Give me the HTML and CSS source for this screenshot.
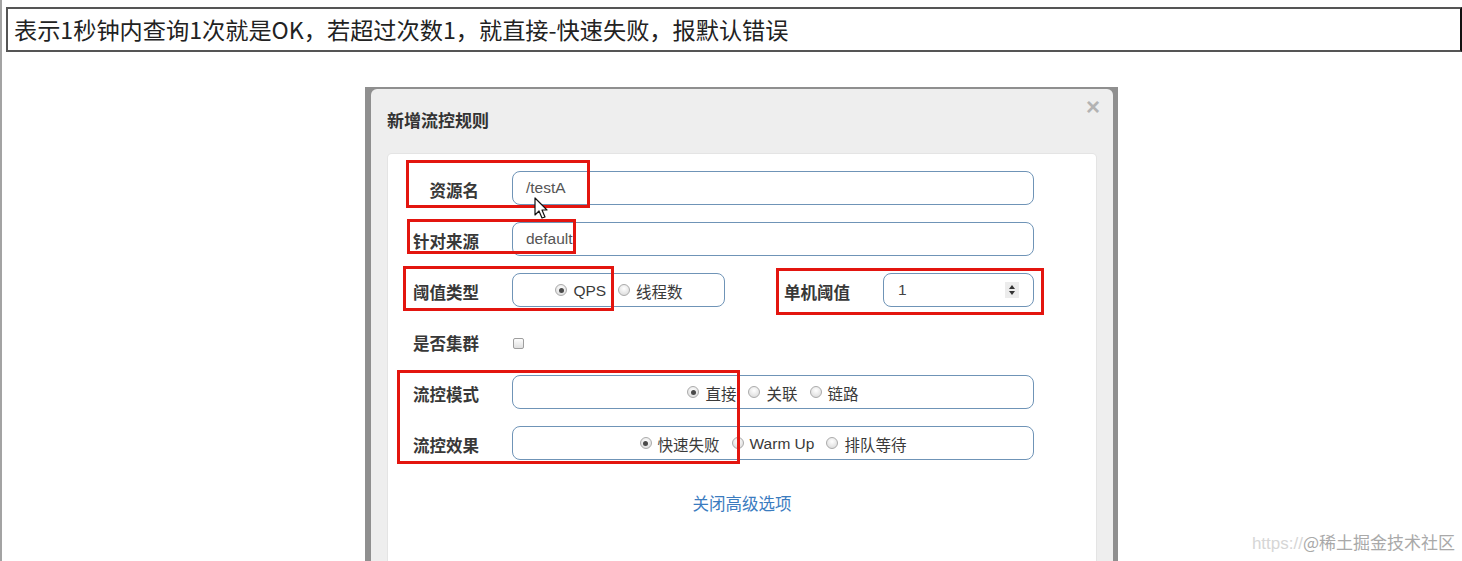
FILE: index.html
```html
<!DOCTYPE html>
<html lang="zh-CN">
<head>
<meta charset="utf-8">
<title>新增流控规则</title>
<link rel="stylesheet" href="styles.css">
</head>
<body>
<div class="page">
  <div class="banner">表示1秒钟内查询1次就是OK，若超过次数1，就直接-快速失败，报默认错误</div>

  <div class="frame">
    <div class="modal">
      <div class="modal-header">
        <div class="modal-title">新增流控规则</div>
        <div class="close">×</div>
      </div>
      <div class="panel">
        <div class="row">
          <div class="label">资源名</div>
          <div class="field wide">/testA</div>
        </div>
        <div class="row">
          <div class="label">针对来源</div>
          <div class="field wide">default</div>
        </div>
        <div class="row">
          <div class="label">阈值类型</div>
          <div class="field radios narrow">
            <span class="opt"><span class="radio on"></span>QPS</span>
            <span class="opt"><span class="radio"></span>线程数</span>
          </div>
          <div class="label label2">单机阈值</div>
          <div class="field number">
            <span>1</span>
            <span class="spin">
              <svg width="8" height="12" viewBox="0 0 8 12"><path d="M4 1 L7 5 L1 5 Z M4 11 L7 7 L1 7 Z" fill="#333"/></svg>
            </span>
          </div>
        </div>
        <div class="row">
          <div class="label">是否集群</div>
          <span class="checkbox"></span>
        </div>
        <div class="row">
          <div class="label">流控模式</div>
          <div class="field radios wide">
            <span class="opt"><span class="radio on"></span>直接</span>
            <span class="opt"><span class="radio"></span>关联</span>
            <span class="opt"><span class="radio"></span>链路</span>
          </div>
        </div>
        <div class="row">
          <div class="label">流控效果</div>
          <div class="field radios wide">
            <span class="opt"><span class="radio on"></span>快速失败</span>
            <span class="opt"><span class="radio"></span>Warm Up</span>
            <span class="opt"><span class="radio"></span>排队等待</span>
          </div>
        </div>
        <div class="more"><a class="link">关闭高级选项</a></div>

        <div class="mark m1"></div>
        <div class="mark m2"></div>
        <div class="mark m3"></div>
        <div class="mark m4"></div>
        <div class="mark m5"></div>

        <svg class="cursor" width="16" height="24" viewBox="0 0 16 24">
          <path d="M1 1 L1 18 L5 14 L8 21 L11 20 L8 13 L13 13 Z" fill="#fff" stroke="#111" stroke-width="1.2" stroke-linejoin="round"/>
        </svg>
      </div>
    </div>
  </div>

  <div class="watermark"><span class="wm-url">https://</span><span class="wm-name">@稀土掘金技术社区</span></div>
</div>
</body>
</html>
```

FILE: styles.css
```css
html, body {
  margin: 0;
  padding: 0;
  background: #fff;
}

.page {
  position: relative;
  height: 561px;
  overflow: hidden;
  border-left: 2px solid #a3a3a3;
  box-sizing: border-box;
  font-family: "Noto Sans CJK SC", sans-serif;
  color: #333;
}

.banner {
  margin: 7px 0 0 4px;
  height: 45px;
  box-sizing: border-box;
  border: 2px solid #555;
  border-right-color: #111;
  padding-left: 6px;
  font-size: 23.2px;
  line-height: 40px;
  color: #222;
  white-space: nowrap;
}

.frame {
  margin: 35px 0 0 363px;
  width: 753px;
  height: 480px;
  box-sizing: border-box;
  background: #8f8f8f;
  padding: 2px 5px 0 6px;
}

.modal {
  background: #eeeeee;
  border-radius: 6px 6px 0 0;
  height: 100%;
}

.modal-header {
  display: flex;
  justify-content: space-between;
  align-items: flex-start;
  height: 65px;
  box-sizing: border-box;
  padding: 0 13px 0 16px;
}

.modal-title {
  margin-top: 19px;
  font-size: 17px;
  line-height: 24px;
  font-weight: 700;
  color: #333;
}

.close {
  margin-top: 6px;
  font-family: "Liberation Sans", sans-serif;
  font-size: 24px;
  line-height: 24px;
  font-weight: 700;
  color: #b3b3b3;
}

.panel {
  position: relative;
  margin: 0 17px;
  height: 420px;
  background: #fff;
  border-radius: 4px 4px 0 0;
  box-shadow: 0 0 0 1px #e4e4e4;
  padding-top: 17px;
  box-sizing: border-box;
}

.row {
  display: flex;
  align-items: center;
  height: 34px;
  margin-bottom: 17px;
}

.label {
  width: 91px;
  margin-right: 33px;
  text-align: right;
  font-size: 16.5px;
  font-weight: 700;
  color: #383838;
  padding-top: 4px;
  white-space: nowrap;
}

.label2 {
  width: 125px;
}

.field {
  height: 34px;
  box-sizing: border-box;
  border: 1px solid #6f94b7;
  border-radius: 8px;
  padding: 0 13px;
  display: flex;
  align-items: center;
  font-family: "Liberation Sans", "Noto Sans CJK SC", sans-serif;
  font-size: 15.5px;
  color: #555;
}

.wide {
  width: 522px;
}

.narrow {
  width: 213px;
  padding-left: 14px;
}

.number {
  width: 151px;
  padding-left: 14px;
  justify-content: space-between;
  padding-right: 14px;
  color: #444;
}

.spin {
  width: 14px;
  height: 16px;
  background: #ececec;
  display: flex;
  align-items: center;
  justify-content: center;
}

.radios {
  justify-content: center;
  color: #3a3a3a;
  padding-top: 2px;
}

.opt {
  display: inline-flex;
  align-items: center;
  gap: 6px;
  margin: 0 6px;
  white-space: nowrap;
}

.radio {
  position: relative;
  width: 12px;
  height: 12px;
  box-sizing: border-box;
  border-radius: 50%;
  border: 1px solid #ababab;
  background: radial-gradient(circle at 50% 35%, #ffffff 0%, #e2e2e2 70%, #d0d0d0 100%);
  margin-top: -2px;
}

.radio.on::after {
  content: "";
  position: absolute;
  left: 2.5px;
  top: 2.5px;
  width: 5px;
  height: 5px;
  border-radius: 50%;
  background: #4a4a4a;
}

.checkbox {
  width: 11px;
  height: 11px;
  box-sizing: border-box;
  border: 1px solid #9e9e9e;
  border-radius: 2px;
  background: linear-gradient(#fdfdfd, #e0e0e0);
  margin-left: 1px;
  margin-top: 5px;
}

.more {
  text-align: center;
  margin-top: 31px;
  line-height: 24px;
}

.link {
  font-size: 16.5px;
  color: #3b7cbf;
}

.mark {
  position: absolute;
  border: 3px solid #e3150f;
  box-sizing: border-box;
}

.m1 { left: 18px; top: 6px; width: 184px; height: 48px; }
.m2 { left: 19px; top: 65px; width: 169px; height: 35px; }
.m3 { left: 15px; top: 112px; width: 211px; height: 45px; }
.m4 { left: 388px; top: 114px; width: 268px; height: 47px; }
.m5 { left: 9px; top: 216px; width: 343px; height: 94px; }

.cursor {
  position: absolute;
  left: 146px;
  top: 43px;
}

.watermark {
  position: absolute;
  right: 7px;
  bottom: 6px;
  font-size: 17px;
  line-height: 22px;
  white-space: nowrap;
}

.wm-url {
  font-family: "Liberation Sans", sans-serif;
  color: #d6d6d6;
}

.wm-name {
  color: #a9a9a9;
}
```
